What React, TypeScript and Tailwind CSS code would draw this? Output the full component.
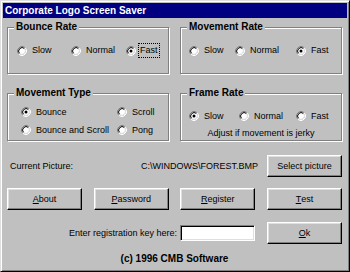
import React from "react";

function Radio({ checked }: { checked?: boolean }) {
  return (
    <svg width="10" height="10" viewBox="0 0 10 10" className="shrink-0">
      <circle cx="5" cy="5" r="3.6" fill="#fff" />
      <path d="M1.82 8.18A4.5 4.5 0 0 1 8.18 1.82" stroke="#808080" fill="none" />
      <path d="M8.18 1.82A4.5 4.5 0 0 1 1.82 8.18" stroke="#fff" fill="none" />
      <path d="M2.53 7.47A3.5 3.5 0 0 1 7.47 2.53" stroke="#000" fill="none" />
      <path d="M7.47 2.53A3.5 3.5 0 0 1 2.53 7.47" stroke="#dfdfdf" fill="none" />
      {checked && <circle cx="5" cy="5" r="1.5" fill="#000" />}
    </svg>
  );
}

function Item({
  w,
  checked,
  children,
}: {
  w?: string;
  checked?: boolean;
  children: React.ReactNode;
}) {
  return (
    <div className={"flex items-center gap-[5px] shrink-0 " + (w || "")}>
      <Radio checked={checked} />
      {children}
    </div>
  );
}

function Group({
  label,
  box,
  children,
}: {
  label: string;
  box: string;
  children: React.ReactNode;
}) {
  return (
    <div className="relative pt-[6px] w-[162px]">
      <div
        className={
          "border border-[#808080] shadow-[1px_1px_0_#fff,inset_1px_1px_0_#fff] " +
          box
        }
      >
        {children}
      </div>
      <span className="absolute top-0 left-[7px] px-[2px] bg-[#c0c0c0] text-[10px] leading-[12px] font-bold">
        {label}
      </span>
    </div>
  );
}

function Btn({ children }: { children: React.ReactNode }) {
  return (
    <button
      type="button"
      className="h-[22px] w-[75px] shrink-0 flex items-center justify-center bg-[#c0c0c0] border border-t-white border-l-white border-r-black border-b-black shadow-[inset_-1px_-1px_0_#808080,inset_1px_1px_0_#dfdfdf] text-[9px] leading-[11px] text-black"
    >
      {children}
    </button>
  );
}

export default function App() {
  return (
    <div className="w-[350px] h-[272px] bg-[#c0c0c0] border border-t-[#dfdfdf] border-l-[#dfdfdf] border-r-black border-b-black shadow-[inset_1px_1px_0_#fff,inset_-1px_-1px_0_#808080] p-[2px] flex flex-col text-black font-['Liberation_Sans',Arial,sans-serif] text-[9px] leading-[11px] overflow-hidden">
      <div className="h-[15px] shrink-0 bg-[#000080] text-white font-bold text-[10px] leading-[15px] pl-[2px]">
        Corporate Logo Screen Saver
      </div>
      <div className="flex flex-col pl-[4px] pr-[5px]">
        <div className="flex justify-between mt-[3px]">
          <Group label="Bounce Rate" box="h-[47px] flex items-center pl-[9px]">
            <Item w="w-[54px]">Slow</Item>
            <Item w="w-[55px]">Normal</Item>
            <Item checked>
              <span className="border border-dotted border-black px-[1px] -ml-[3px] leading-[13px]">
                Fast
              </span>
            </Item>
          </Group>
          <Group label="Movement Rate" box="h-[47px] flex items-center pl-[8px]">
            <Item w="w-[46px]">Slow</Item>
            <Item w="w-[61px]">Normal</Item>
            <Item checked>Fast</Item>
          </Group>
        </div>
        <div className="flex justify-between mt-[13px]">
          <Group label="Movement Type" box="h-[48px] pt-[9px] pl-[13px]">
            <div className="grid grid-cols-[96px_auto] auto-rows-[18px] items-center">
              <Item checked>Bounce</Item>
              <Item>Scroll</Item>
              <Item>Bounce and Scroll</Item>
              <Item>Pong</Item>
            </div>
          </Group>
          <Group label="Frame Rate" box="h-[48px] pt-[15px] pl-[8px]">
            <div className="flex items-center h-[14px]">
              <Item w="w-[50px]" checked>
                Slow
              </Item>
              <Item w="w-[57px]">Normal</Item>
              <Item>Fast</Item>
            </div>
            <div className="mt-[4px] h-[12px] leading-[12px] text-center -ml-[8px]">
              Adjust if movement is jerky
            </div>
          </Group>
        </div>
        <div className="flex items-center h-[22px] mt-[14px]">
          <span className="w-[134px] pl-[3px] shrink-0">Current Picture:</span>
          <span className="flex-1">{"C:\\WINDOWS\\FOREST.BMP"}</span>
          <Btn>Select picture</Btn>
        </div>
        <div className="flex justify-between h-[22px] mt-[11px]">
          <Btn>
            <span className="underline">A</span>bout
          </Btn>
          <Btn>
            <span className="underline">P</span>assword
          </Btn>
          <Btn>
            <span className="underline">R</span>egister
          </Btn>
          <Btn>
            <span className="underline">T</span>est
          </Btn>
        </div>
        <div className="flex items-center h-[22px] mt-[12px]">
          <span className="flex-1 text-right pr-[3px]">Enter registration key here:</span>
          <input
            readOnly
            className="w-[75px] h-[16px] bg-white border border-t-[#808080] border-l-[#808080] border-r-white border-b-white shadow-[inset_1px_1px_0_#000,inset_-1px_-1px_0_#dfdfdf] outline-none"
          />
          <div className="ml-[12px]">
            <Btn>
              <span className="underline">O</span>k
            </Btn>
          </div>
        </div>
        <div className="mt-[9px] h-[12px] leading-[12px] text-center font-bold text-[10px]">
          (c) 1996 CMB Software
        </div>
      </div>
    </div>
  );
}
